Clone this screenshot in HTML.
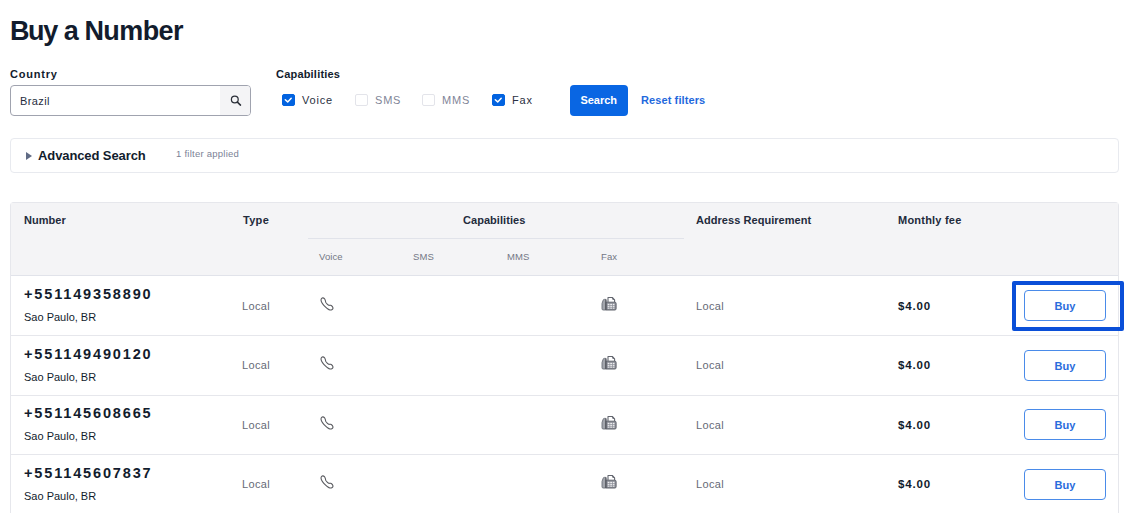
<!DOCTYPE html>
<html lang="en">
<head>
<meta charset="utf-8">
<title>Buy a Number</title>
<style>
*{box-sizing:border-box;margin:0;padding:0}
html,body{width:1131px;height:513px;overflow:hidden;background:#fff}
body{font-family:"Liberation Sans",sans-serif;color:#121c2d;position:relative}
.abs{position:absolute;white-space:nowrap;line-height:1}
h1{position:absolute;left:10px;top:16px;font-size:27px;font-weight:700;line-height:30px;letter-spacing:-0.6px;color:#121c2d;white-space:nowrap}
.lbl{font-size:11px;font-weight:700;color:#121c2d;letter-spacing:.2px}
.lbl.w{letter-spacing:.8px}
.input{position:absolute;left:10px;top:85px;width:241px;height:31px;border:1px solid #a0a3af;border-radius:4px;background:#fff;overflow:hidden}
.input .val{position:absolute;left:9px;top:9px;font-size:11px;line-height:13px;color:#262d3e;letter-spacing:.4px}
.input .suf{position:absolute;right:0;top:0;width:30px;height:29px;background:#f4f4f6}
.cb{position:absolute;top:94px;width:13px;height:12px;border-radius:2px;border:1px solid #e3e4ea;background:#fff}
.cb.on{background:#0263e0;border-color:#0263e0}
.cb svg{position:absolute;left:-1px;top:-1px}
.cbl{position:absolute;top:94px;font-size:11px;line-height:13px;letter-spacing:.8px;color:#2a3142}
.cbl.off{color:#7f8598}
.btn{position:absolute;left:569.5px;top:85px;width:58.5px;height:30.5px;border-radius:4px;background:#0966e3;color:#fff;font-size:11px;font-weight:700;text-align:center;line-height:31px}
.link{position:absolute;left:641px;top:94px;font-size:11px;line-height:13px;font-weight:700;color:#1f69dd;letter-spacing:.1px}
.adv{position:absolute;left:10px;top:138px;width:1109px;height:35px;border:1px solid #e8eaef;border-radius:4px;background:#fff}
.adv .tri{position:absolute;left:15px;top:13px;width:0;height:0;border-left:6px solid #606b85;border-top:4px solid transparent;border-bottom:4px solid transparent}
.adv .t{position:absolute;left:27px;top:9px;font-size:13px;line-height:16px;font-weight:700;color:#121c2d;letter-spacing:-.1px}
.adv .s{position:absolute;left:165px;top:9px;font-size:9.5px;line-height:11px;color:#7b8296;letter-spacing:.25px}
.tbl{position:absolute;left:10px;top:202px;width:1109px;height:320px;border:1px solid #e6e7ec;border-bottom:0;border-radius:4px 4px 0 0;background:#fff}
.thead{position:absolute;left:0;top:0;width:1107px;height:73px;background:#f4f4f6;border-bottom:1px solid #e1e3ea}
.th{position:absolute;top:11px;letter-spacing:.05px;font-size:11px;line-height:13px;font-weight:700;color:#232b3c}
.sub{position:absolute;top:48px;letter-spacing:.1px;font-size:9.5px;line-height:11px;color:#737785}
.hl{position:absolute;left:297px;top:35px;width:376px;height:1px;background:#e1e3ea}
.row{position:absolute;left:0;width:1107px;height:60px}
.ln{position:absolute;left:0;width:1107px;height:1px;background:#e6e7ec}
.row.m .c,.row.m .fee,.row.m .ph,.row.m .fx{margin-top:-1px}
.num{position:absolute;left:13px;top:10px;font-size:14.5px;line-height:17px;font-weight:700;letter-spacing:1.85px;color:#121c2d}
.loc{position:absolute;left:13px;top:35px;font-size:11px;line-height:13px;color:#121c2d}
.c{position:absolute;top:24px;font-size:11px;line-height:13px;color:#666a76;letter-spacing:.35px}
.fee{position:absolute;left:887px;top:24px;font-size:11.5px;line-height:13px;font-weight:700;color:#121c2d;letter-spacing:.85px}
.buy{position:absolute;left:1013px;top:14px;width:82px;height:31px;border:1px solid #4a8be9;border-radius:4px;background:#fff;color:#2a6cdc;font-size:11px;font-weight:700;text-align:center;line-height:31px}
.ph{position:absolute;left:309px;top:21px}
.fx{position:absolute;left:590px;top:20px}
.focus{position:absolute;left:1012px;top:281px;width:112px;height:50px;border:4px solid #0a4fd8;border-radius:2px}
</style>
</head>
<body>
<h1><span style="letter-spacing:-1.4px">Buy</span> <span style="letter-spacing:-1.2px">a</span> <span>Number</span></h1>

<div class="abs lbl w" style="left:10px;top:69px">Country</div>
<div class="input"><span class="val">Brazil</span><span class="suf"><svg width="30" height="29" viewBox="0 0 30 29"><circle cx="14.8" cy="13.5" r="3.4" fill="none" stroke="#2b2f38" stroke-width="1.25"/><path d="M17.4 16.1l3.1 3" stroke="#2b2f38" stroke-width="1.5" stroke-linecap="round"/></svg></span></div>

<div class="abs lbl" style="left:276px;top:69px">Capabilities</div>
<span class="cb on" style="left:282px"><svg width="13" height="12" viewBox="0 0 13 12"><path d="M3.3 5.8l2.4 2.1 3.5-3.7" fill="none" stroke="#fff" stroke-width="1.5" stroke-linecap="round" stroke-linejoin="round"/></svg></span><span class="cbl" style="left:302px">Voice</span>
<span class="cb" style="left:355px"></span><span class="cbl off" style="left:375px">SMS</span>
<span class="cb" style="left:422px"></span><span class="cbl off" style="left:442px">MMS</span>
<span class="cb on" style="left:492px"><svg width="13" height="12" viewBox="0 0 13 12"><path d="M3.3 5.8l2.4 2.1 3.5-3.7" fill="none" stroke="#fff" stroke-width="1.5" stroke-linecap="round" stroke-linejoin="round"/></svg></span><span class="cbl" style="left:512px">Fax</span>
<div class="btn">Search</div>
<div class="link">Reset filters</div>

<div class="adv"><span class="tri"></span><span class="t">Advanced Search</span><span class="s">1 filter applied</span></div>

<div class="tbl">
  <div class="thead">
    <span class="th" style="left:13px">Number</span>
    <span class="th" style="left:232px;letter-spacing:.3px">Type</span>
    <span class="th" style="left:452px">Capabilities</span>
    <span class="th" style="left:685px">Address Requirement</span>
    <span class="th" style="left:887px;letter-spacing:.22px">Monthly fee</span>
    <span class="hl"></span>
    <span class="sub" style="left:308px">Voice</span>
    <span class="sub" style="left:402px">SMS</span>
    <span class="sub" style="left:496px">MMS</span>
    <span class="sub" style="left:590px">Fax</span>
  </div>
  <div class="row" style="top:73px"><span class="num">+551149358890</span><span class="loc">Sao Paulo, BR</span><span class="c" style="left:231px">Local</span><svg class="ph" width="14" height="14" viewBox="0 0 14 14"><path d="M1.09 2.46C1.03 2.96 1.00 3.63 1.29 4.41C1.58 5.19 2.17 6.23 2.85 7.14C3.53 8.05 4.54 9.05 5.38 9.87C6.23 10.68 7.17 11.49 7.92 12.01C8.66 12.53 9.22 12.85 9.87 12.98C10.52 13.11 11.29 13.05 11.81 12.79C12.33 12.53 12.89 11.94 12.98 11.42C13.08 10.91 12.79 10.19 12.40 9.67C12.01 9.15 11.26 8.53 10.65 8.31C10.03 8.08 9.31 8.53 8.70 8.31C8.08 8.08 7.43 7.43 6.94 6.94C6.45 6.45 6.03 5.93 5.77 5.38C5.51 4.83 5.61 4.24 5.38 3.63C5.15 3.01 4.83 2.13 4.41 1.68C3.99 1.22 3.30 0.95 2.85 0.90C2.39 0.85 1.97 1.11 1.68 1.37C1.39 1.63 1.16 1.95 1.09 2.46Z" fill="none" stroke="#595a5f" stroke-width="1.1" stroke-linejoin="round"/></svg><svg class="fx" width="16" height="15" viewBox="0 0 16 15"><path d="M7 6.2V1.5h4.3L13.6 3.8V6.2" fill="#fff" stroke="#63666f" stroke-width="1.1" stroke-linejoin="round"/><path d="M10.6 1.5l1.2 2.6 1.8-.3z" fill="#63666f"/><path d="M2 4.6Q2.2 3.4 3.4 3.4H4.9V14H2.2Q1 14 1 12.8V7.5z" fill="#a3a6ad" stroke="#6c6f78" stroke-width=".9"/><path d="M4.9 6.2h9a1.2 1.2 0 0 1 1.2 1.2v5.4a1.2 1.2 0 0 1-1.2 1.2H4.9z" fill="#8b8e97" stroke="#63666f" stroke-width="1"/><path d="M4.9 3.4V14" stroke="#55585f" stroke-width="1.1"/><g fill="#eeeef0"><rect x="6.7" y="7.8" width="1.8" height="1.2"/><rect x="9.2" y="7.8" width="1.8" height="1.2"/><rect x="11.7" y="7.8" width="1.8" height="1.2"/><rect x="6.7" y="9.7" width="1.8" height="1.2"/><rect x="9.2" y="9.7" width="1.8" height="1.2"/><rect x="11.7" y="9.7" width="1.8" height="1.2"/><rect x="6.7" y="11.6" width="1.8" height="1.1"/><rect x="9.2" y="11.6" width="1.8" height="1.1"/><rect x="11.7" y="11.6" width="1.8" height="1.1"/></g></svg><span class="c" style="left:685px">Local</span><span class="fee">$4.00</span><span class="buy">Buy</span></div>
  <div class="row m" style="top:133px"><span class="num">+551149490120</span><span class="loc">Sao Paulo, BR</span><span class="c" style="left:231px">Local</span><svg class="ph" width="14" height="14" viewBox="0 0 14 14"><path d="M1.09 2.46C1.03 2.96 1.00 3.63 1.29 4.41C1.58 5.19 2.17 6.23 2.85 7.14C3.53 8.05 4.54 9.05 5.38 9.87C6.23 10.68 7.17 11.49 7.92 12.01C8.66 12.53 9.22 12.85 9.87 12.98C10.52 13.11 11.29 13.05 11.81 12.79C12.33 12.53 12.89 11.94 12.98 11.42C13.08 10.91 12.79 10.19 12.40 9.67C12.01 9.15 11.26 8.53 10.65 8.31C10.03 8.08 9.31 8.53 8.70 8.31C8.08 8.08 7.43 7.43 6.94 6.94C6.45 6.45 6.03 5.93 5.77 5.38C5.51 4.83 5.61 4.24 5.38 3.63C5.15 3.01 4.83 2.13 4.41 1.68C3.99 1.22 3.30 0.95 2.85 0.90C2.39 0.85 1.97 1.11 1.68 1.37C1.39 1.63 1.16 1.95 1.09 2.46Z" fill="none" stroke="#595a5f" stroke-width="1.1" stroke-linejoin="round"/></svg><svg class="fx" width="16" height="15" viewBox="0 0 16 15"><path d="M7 6.2V1.5h4.3L13.6 3.8V6.2" fill="#fff" stroke="#63666f" stroke-width="1.1" stroke-linejoin="round"/><path d="M10.6 1.5l1.2 2.6 1.8-.3z" fill="#63666f"/><path d="M2 4.6Q2.2 3.4 3.4 3.4H4.9V14H2.2Q1 14 1 12.8V7.5z" fill="#a3a6ad" stroke="#6c6f78" stroke-width=".9"/><path d="M4.9 6.2h9a1.2 1.2 0 0 1 1.2 1.2v5.4a1.2 1.2 0 0 1-1.2 1.2H4.9z" fill="#8b8e97" stroke="#63666f" stroke-width="1"/><path d="M4.9 3.4V14" stroke="#55585f" stroke-width="1.1"/><g fill="#eeeef0"><rect x="6.7" y="7.8" width="1.8" height="1.2"/><rect x="9.2" y="7.8" width="1.8" height="1.2"/><rect x="11.7" y="7.8" width="1.8" height="1.2"/><rect x="6.7" y="9.7" width="1.8" height="1.2"/><rect x="9.2" y="9.7" width="1.8" height="1.2"/><rect x="11.7" y="9.7" width="1.8" height="1.2"/><rect x="6.7" y="11.6" width="1.8" height="1.1"/><rect x="9.2" y="11.6" width="1.8" height="1.1"/><rect x="11.7" y="11.6" width="1.8" height="1.1"/></g></svg><span class="c" style="left:685px">Local</span><span class="fee">$4.00</span><span class="buy">Buy</span></div>
  <div class="row" style="top:192px"><span class="num">+551145608665</span><span class="loc">Sao Paulo, BR</span><span class="c" style="left:231px">Local</span><svg class="ph" width="14" height="14" viewBox="0 0 14 14"><path d="M1.09 2.46C1.03 2.96 1.00 3.63 1.29 4.41C1.58 5.19 2.17 6.23 2.85 7.14C3.53 8.05 4.54 9.05 5.38 9.87C6.23 10.68 7.17 11.49 7.92 12.01C8.66 12.53 9.22 12.85 9.87 12.98C10.52 13.11 11.29 13.05 11.81 12.79C12.33 12.53 12.89 11.94 12.98 11.42C13.08 10.91 12.79 10.19 12.40 9.67C12.01 9.15 11.26 8.53 10.65 8.31C10.03 8.08 9.31 8.53 8.70 8.31C8.08 8.08 7.43 7.43 6.94 6.94C6.45 6.45 6.03 5.93 5.77 5.38C5.51 4.83 5.61 4.24 5.38 3.63C5.15 3.01 4.83 2.13 4.41 1.68C3.99 1.22 3.30 0.95 2.85 0.90C2.39 0.85 1.97 1.11 1.68 1.37C1.39 1.63 1.16 1.95 1.09 2.46Z" fill="none" stroke="#595a5f" stroke-width="1.1" stroke-linejoin="round"/></svg><svg class="fx" width="16" height="15" viewBox="0 0 16 15"><path d="M7 6.2V1.5h4.3L13.6 3.8V6.2" fill="#fff" stroke="#63666f" stroke-width="1.1" stroke-linejoin="round"/><path d="M10.6 1.5l1.2 2.6 1.8-.3z" fill="#63666f"/><path d="M2 4.6Q2.2 3.4 3.4 3.4H4.9V14H2.2Q1 14 1 12.8V7.5z" fill="#a3a6ad" stroke="#6c6f78" stroke-width=".9"/><path d="M4.9 6.2h9a1.2 1.2 0 0 1 1.2 1.2v5.4a1.2 1.2 0 0 1-1.2 1.2H4.9z" fill="#8b8e97" stroke="#63666f" stroke-width="1"/><path d="M4.9 3.4V14" stroke="#55585f" stroke-width="1.1"/><g fill="#eeeef0"><rect x="6.7" y="7.8" width="1.8" height="1.2"/><rect x="9.2" y="7.8" width="1.8" height="1.2"/><rect x="11.7" y="7.8" width="1.8" height="1.2"/><rect x="6.7" y="9.7" width="1.8" height="1.2"/><rect x="9.2" y="9.7" width="1.8" height="1.2"/><rect x="11.7" y="9.7" width="1.8" height="1.2"/><rect x="6.7" y="11.6" width="1.8" height="1.1"/><rect x="9.2" y="11.6" width="1.8" height="1.1"/><rect x="11.7" y="11.6" width="1.8" height="1.1"/></g></svg><span class="c" style="left:685px">Local</span><span class="fee">$4.00</span><span class="buy">Buy</span></div>
  <div class="row m" style="top:252px"><span class="num">+551145607837</span><span class="loc">Sao Paulo, BR</span><span class="c" style="left:231px">Local</span><svg class="ph" width="14" height="14" viewBox="0 0 14 14"><path d="M1.09 2.46C1.03 2.96 1.00 3.63 1.29 4.41C1.58 5.19 2.17 6.23 2.85 7.14C3.53 8.05 4.54 9.05 5.38 9.87C6.23 10.68 7.17 11.49 7.92 12.01C8.66 12.53 9.22 12.85 9.87 12.98C10.52 13.11 11.29 13.05 11.81 12.79C12.33 12.53 12.89 11.94 12.98 11.42C13.08 10.91 12.79 10.19 12.40 9.67C12.01 9.15 11.26 8.53 10.65 8.31C10.03 8.08 9.31 8.53 8.70 8.31C8.08 8.08 7.43 7.43 6.94 6.94C6.45 6.45 6.03 5.93 5.77 5.38C5.51 4.83 5.61 4.24 5.38 3.63C5.15 3.01 4.83 2.13 4.41 1.68C3.99 1.22 3.30 0.95 2.85 0.90C2.39 0.85 1.97 1.11 1.68 1.37C1.39 1.63 1.16 1.95 1.09 2.46Z" fill="none" stroke="#595a5f" stroke-width="1.1" stroke-linejoin="round"/></svg><svg class="fx" width="16" height="15" viewBox="0 0 16 15"><path d="M7 6.2V1.5h4.3L13.6 3.8V6.2" fill="#fff" stroke="#63666f" stroke-width="1.1" stroke-linejoin="round"/><path d="M10.6 1.5l1.2 2.6 1.8-.3z" fill="#63666f"/><path d="M2 4.6Q2.2 3.4 3.4 3.4H4.9V14H2.2Q1 14 1 12.8V7.5z" fill="#a3a6ad" stroke="#6c6f78" stroke-width=".9"/><path d="M4.9 6.2h9a1.2 1.2 0 0 1 1.2 1.2v5.4a1.2 1.2 0 0 1-1.2 1.2H4.9z" fill="#8b8e97" stroke="#63666f" stroke-width="1"/><path d="M4.9 3.4V14" stroke="#55585f" stroke-width="1.1"/><g fill="#eeeef0"><rect x="6.7" y="7.8" width="1.8" height="1.2"/><rect x="9.2" y="7.8" width="1.8" height="1.2"/><rect x="11.7" y="7.8" width="1.8" height="1.2"/><rect x="6.7" y="9.7" width="1.8" height="1.2"/><rect x="9.2" y="9.7" width="1.8" height="1.2"/><rect x="11.7" y="9.7" width="1.8" height="1.2"/><rect x="6.7" y="11.6" width="1.8" height="1.1"/><rect x="9.2" y="11.6" width="1.8" height="1.1"/><rect x="11.7" y="11.6" width="1.8" height="1.1"/></g></svg><span class="c" style="left:685px">Local</span><span class="fee">$4.00</span><span class="buy">Buy</span></div>
  <i class="ln" style="top:132px"></i><i class="ln" style="top:192px"></i><i class="ln" style="top:251px"></i>
</div>
<div class="focus"></div>
</body>
</html>
